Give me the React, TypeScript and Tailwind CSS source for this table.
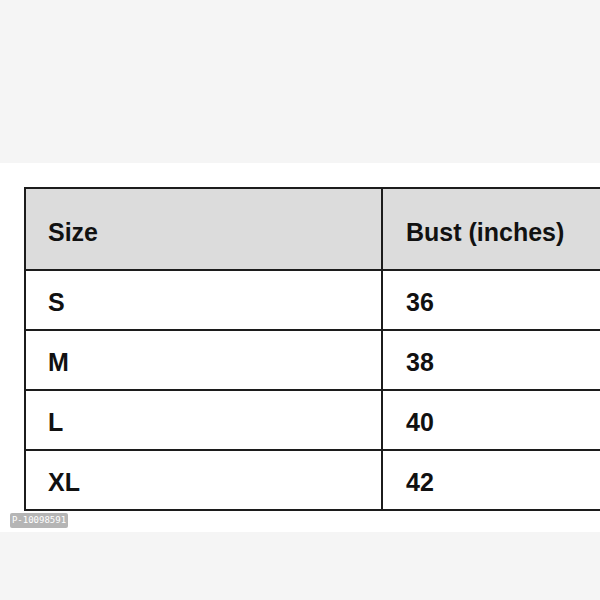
import React from "react";

const rows = [
  ["S", "36"],
  ["M", "38"],
  ["L", "40"],
  ["XL", "42"],
];

export default function App() {
  return (
    <div
      className="relative w-[600px] h-[600px] overflow-hidden bg-[#f5f5f5]"
      style={{ fontFamily: '"Liberation Sans", Arial, sans-serif' }}
    >
      <div className="h-[163px]" />
      <div className="h-[369px] bg-white pt-[24px] pl-[24px]">
        <div className="w-[700px] border-t-2 border-l-2 border-[#1c1c1c] text-[25px] font-bold text-[#111]">
          <div className="flex h-[82px] bg-[#dcdcdc] border-b-2 border-[#1c1c1c]">
            <div className="w-[357px] border-r-2 border-[#1c1c1c] flex items-center pl-[22px] pt-[8px]">Size</div>
            <div className="flex-1 flex items-center pl-[23px] pt-[8px]">Bust (inches)</div>
          </div>
          {rows.map(([s, b]) => (
            <div key={s} className="flex h-[60px] border-b-2 border-[#1c1c1c]">
              <div className="w-[357px] border-r-2 border-[#1c1c1c] flex items-center pl-[22px] pt-[6px]">{s}</div>
              <div className="flex-1 flex items-center pl-[23px] pt-[6px]">{b}</div>
            </div>
          ))}
        </div>
      </div>
      <div
        className="absolute left-[10px] top-[513px] h-[15px] w-[58px] rounded-[2px] bg-[#b5b5b5] text-white text-[9px] leading-[15px] whitespace-nowrap flex items-center justify-center"
        style={{ fontFamily: '"DejaVu Sans Mono", monospace' }}
      >
        P-10098591
      </div>
    </div>
  );
}
